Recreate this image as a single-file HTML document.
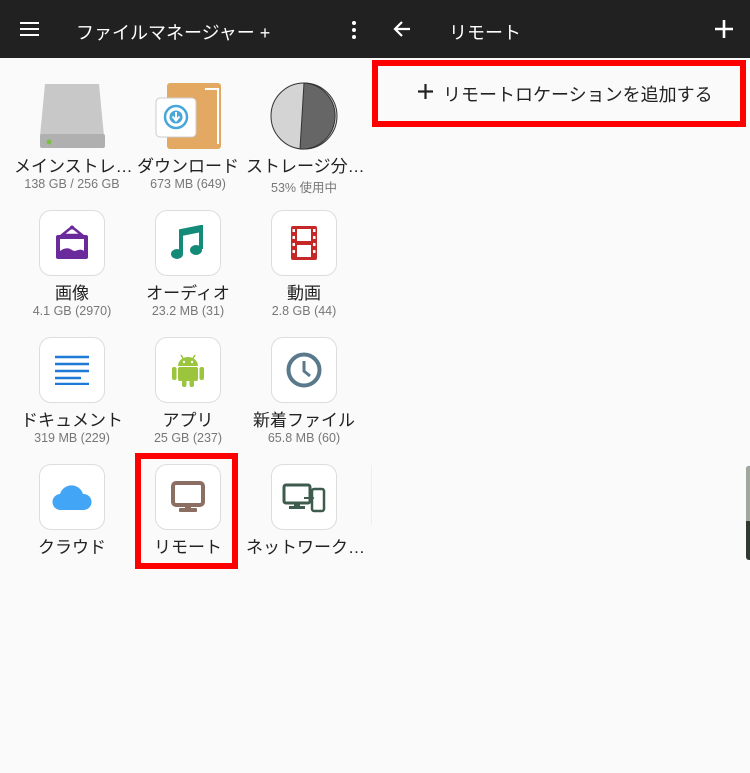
<!DOCTYPE html>
<html><head><meta charset="utf-8"><style>
*{margin:0;padding:0;box-sizing:border-box}
body{width:750px;height:773px;background:#fafafa;position:relative;overflow:hidden;font-family:"Liberation Sans","Noto Sans CJK JP",sans-serif}
.bar{position:absolute;left:0;top:0;width:750px;height:58px;background:#212121}
.t{position:absolute;color:#fff;font-size:18px;top:19px}
.tile{position:absolute;width:66px;height:66px;border:1px solid #ddd;border-radius:12px;background:#fff;display:flex;align-items:center;justify-content:center}
.lab{position:absolute;width:116px;text-align:center;font-size:17px;color:#222;white-space:nowrap}
.sub{position:absolute;width:116px;text-align:center;font-size:12.5px;color:#777}
.red{position:absolute;border:6px solid #f00}
</style></head><body>
<div class="bar"></div>
<div style="position:absolute;left:20px;top:22px;width:19px;height:2px;background:#fff;box-shadow:0 6px 0 #fff,0 12px 0 #fff"></div>
<div class="t" style="left:76px">ファイルマネージャー +</div>
<div style="position:absolute;left:352px;top:21px;width:4px;height:4px;border-radius:2px;background:#fff;box-shadow:0 7px 0 #fff,0 14px 0 #fff"></div>
<svg style="position:absolute;left:392px;top:19px" width="20" height="20" viewBox="0 0 20 20"><path d="M18 10H3M10 3L3 10l7 7" stroke="#fff" stroke-width="2.2" fill="none"/></svg>
<div class="t" style="left:449px">リモート</div>
<svg style="position:absolute;left:714px;top:19px" width="20" height="20"><path d="M10 1v18M1 10h18" stroke="#fff" stroke-width="2.6"/></svg>

<div class="red" style="left:372px;top:60px;width:374px;height:67px"></div>
<svg style="position:absolute;left:418px;top:84px" width="15" height="15"><path d="M7.5 0v15M0 7.5h15" stroke="#222" stroke-width="2.2"/></svg>
<div style="position:absolute;left:443px;top:81px;font-size:18px;color:#222">リモートロケーションを追加する</div>
<div style="position:absolute;left:746px;top:466px;width:4px;height:94px;background:#2f3a30;border-radius:3px 0 0 3px"></div>
<div style="position:absolute;left:746px;top:466px;width:4px;height:55px;background:#a0a89e;border-radius:3px 0 0 0"></div>
<div style="position:absolute;left:371px;top:465px;width:1px;height:60px;background:#eee"></div>

<!-- row1 -->
<svg style="position:absolute;left:39px;top:82px" width="67" height="68"><path d="M6 2h54l5 52H1z" fill="#c8c8c8"/><rect x="1" y="52" width="65" height="14" rx="2" fill="#b0b0b0"/><circle cx="10" cy="60" r="2.5" fill="#7bc043"/></svg>
<svg style="position:absolute;left:155px;top:82px" width="68" height="68"><rect x="12" y="1" width="54" height="66" rx="3" fill="#e3a862"/><rect x="50" y="6" width="14" height="56" fill="#fff"/><rect x="48" y="8" width="14" height="56" fill="#e3a862"/><rect x="1" y="16" width="40" height="39" rx="4" fill="#fff" stroke="#ccc"/><circle cx="21" cy="35" r="11" fill="#fff" stroke="#48a7d8" stroke-width="2.5"/><circle cx="21" cy="35" r="6.5" fill="#48a7d8"/><path d="M21 30v8M17.5 34.5l3.5 4 3.5-4" stroke="#fff" stroke-width="2" fill="none"/></svg>
<svg style="position:absolute;left:270px;top:82px" width="68" height="68"><circle cx="34" cy="34" r="33" fill="#d4d4d4" stroke="#333" stroke-width="1"/><path d="M34 1A33 33 0 0 1 30 67Z" fill="#666" stroke="#333"/></svg>
<div class="lab" style="left:14px;top:152px">メインストレ…</div><div class="sub" style="left:14px;top:177px">138 GB / 256 GB</div>
<div class="lab" style="left:130px;top:152px">ダウンロード</div><div class="sub" style="left:130px;top:177px">673 MB (649)</div>
<div class="lab" style="left:246px;top:152px">ストレージ分…</div><div class="sub" style="left:246px;top:177px">53% 使用中</div>

<!-- row2 -->
<div class="tile" style="left:39px;top:210px"><svg width="36" height="36" viewBox="0 0 36 36"><path d="M18 2L8 10h20z" fill="none" stroke="#6b2a9c" stroke-width="2.5"/><circle cx="18" cy="2.5" r="2" fill="#6b2a9c"/><rect x="2" y="10" width="32" height="24" rx="2" fill="#6b2a9c"/><path d="M6 14h24v12c-5-4-8 2-12-1s-8-2-12 1z" fill="#fff"/></svg></div>
<div class="tile" style="left:155px;top:210px"><svg width="34" height="36"><path d="M10 28V6l20-4v22" stroke="#138b78" stroke-width="4" fill="none"/><path d="M10 8l20-4" stroke="#138b78" stroke-width="6"/><ellipse cx="6" cy="29" rx="6" ry="5" fill="#138b78"/><ellipse cx="25" cy="25" rx="6" ry="5" fill="#138b78"/></svg></div>
<div class="tile" style="left:271px;top:210px"><svg width="28" height="36"><rect x="1" y="1" width="26" height="34" rx="2" fill="#c62828"/><rect x="7" y="4" width="14" height="12" fill="#fff"/><rect x="7" y="20" width="14" height="12" fill="#fff"/><g fill="#fff"><rect x="2.5" y="4" width="2.5" height="3"/><rect x="2.5" y="11" width="2.5" height="3"/><rect x="2.5" y="18" width="2.5" height="3"/><rect x="2.5" y="25" width="2.5" height="3"/><rect x="23" y="4" width="2.5" height="3"/><rect x="23" y="11" width="2.5" height="3"/><rect x="23" y="18" width="2.5" height="3"/><rect x="23" y="25" width="2.5" height="3"/></g></svg></div>
<div class="lab" style="left:14px;top:279px">画像</div><div class="sub" style="left:14px;top:304px">4.1 GB (2970)</div>
<div class="lab" style="left:130px;top:279px">オーディオ</div><div class="sub" style="left:130px;top:304px">23.2 MB (31)</div>
<div class="lab" style="left:246px;top:279px">動画</div><div class="sub" style="left:246px;top:304px">2.8 GB (44)</div>

<!-- row3 -->
<div class="tile" style="left:39px;top:337px"><svg width="36" height="30"><g stroke="#1e7ad6" stroke-width="2.5"><path d="M1 2h34M1 9h34M1 16h34M1 23h26M1 29h34"/></g></svg></div>
<div class="tile" style="left:155px;top:337px"><svg width="32" height="34"><path d="M6 13a10 9 0 0 1 20 0z" fill="#9bc53d"/><path d="M9 2l3 5M23 2l-3 5" stroke="#9bc53d" stroke-width="1.5"/><circle cx="12" cy="9" r="1.2" fill="#fff"/><circle cx="20" cy="9" r="1.2" fill="#fff"/><rect x="6" y="14" width="20" height="14" rx="2" fill="#9bc53d"/><rect x="0" y="14" width="4.5" height="13" rx="2" fill="#9bc53d"/><rect x="27.5" y="14" width="4.5" height="13" rx="2" fill="#9bc53d"/><rect x="10" y="26" width="4.5" height="8" rx="2" fill="#9bc53d"/><rect x="17.5" y="26" width="4.5" height="8" rx="2" fill="#9bc53d"/></svg></div>
<div class="tile" style="left:271px;top:337px"><svg width="36" height="36"><circle cx="18" cy="18" r="15.5" fill="none" stroke="#5a7a8c" stroke-width="4"/><path d="M18 9v10l6 5" stroke="#5a7a8c" stroke-width="3" fill="none"/></svg></div>
<div class="lab" style="left:14px;top:406px">ドキュメント</div><div class="sub" style="left:14px;top:431px">319 MB (229)</div>
<div class="lab" style="left:130px;top:406px">アプリ</div><div class="sub" style="left:130px;top:431px">25 GB (237)</div>
<div class="lab" style="left:246px;top:406px">新着ファイル</div><div class="sub" style="left:246px;top:431px">65.8 MB (60)</div>

<!-- row4 -->
<div class="tile" style="left:39px;top:464px"><svg width="40" height="28"><path d="M9 27a8 8 0 0 1-1-16 12 12 0 0 1 23 0 8 8 0 0 1 1 16z" fill="#42a5f5"/></svg></div>
<div class="tile" style="left:155px;top:464px"><svg width="34" height="32"><rect x="2" y="2" width="30" height="22" rx="3" fill="none" stroke="#8d6e63" stroke-width="4"/><rect x="14" y="24" width="6" height="4" fill="#8d6e63"/><rect x="8" y="27" width="18" height="4" rx="1" fill="#8d6e63"/></svg></div>
<div class="tile" style="left:271px;top:464px"><svg width="44" height="32"><rect x="2" y="4" width="26" height="18" rx="2" fill="none" stroke="#3e5c4e" stroke-width="3"/><rect x="12" y="22" width="6" height="4" fill="#3e5c4e"/><rect x="7" y="25" width="16" height="3" fill="#3e5c4e"/><rect x="30" y="8" width="12" height="22" rx="2" fill="none" stroke="#3e5c4e" stroke-width="2.5"/><path d="M22 17h9M28 14l3 3-3 3" stroke="#3e5c4e" stroke-width="2" fill="none"/></svg></div>
<div class="lab" style="left:14px;top:533px">クラウド</div>
<div class="lab" style="left:130px;top:533px">リモート</div>
<div class="lab" style="left:246px;top:533px">ネットワーク…</div>
<div class="red" style="left:135px;top:453px;width:103px;height:116px"></div>
</body></html>
